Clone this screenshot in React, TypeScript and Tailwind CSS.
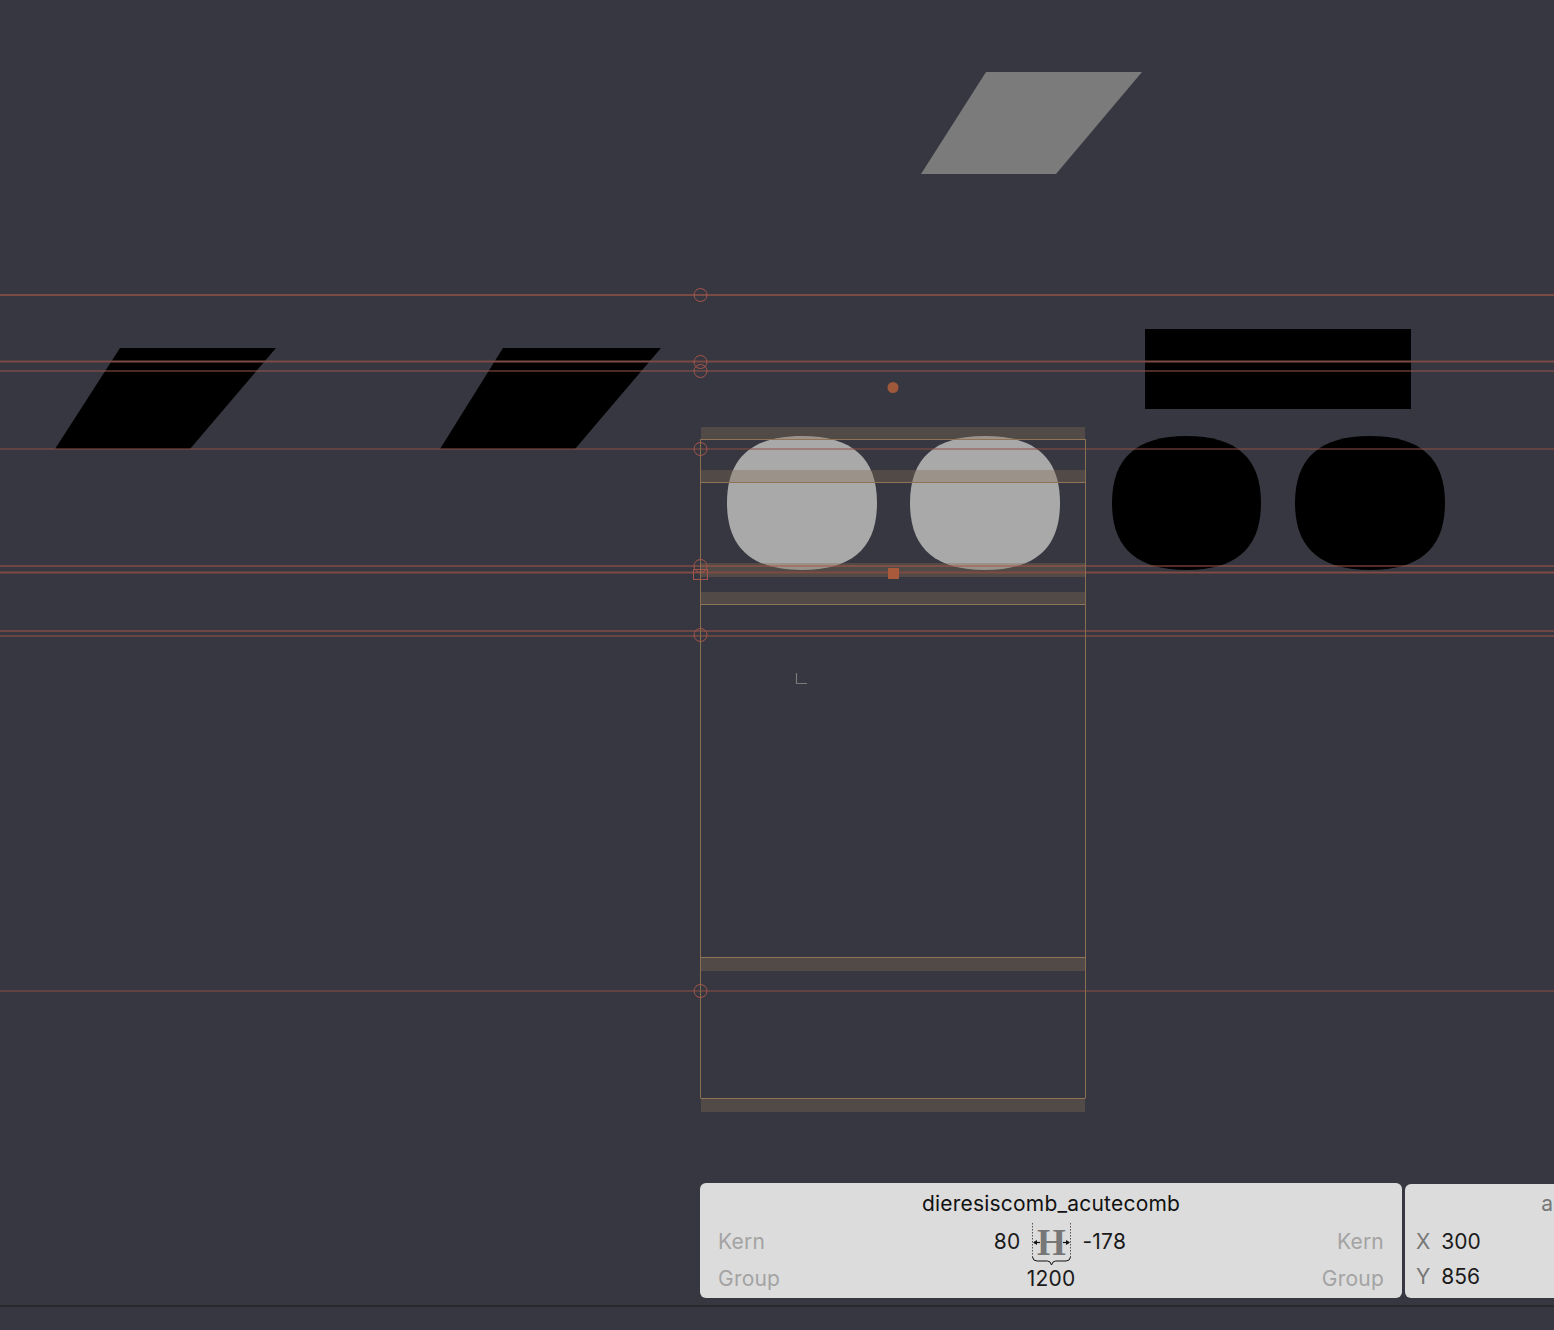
import React from 'react';

const guides = [
  { y: 295, w: 2, c: '#7a4a44' },
  { y: 361.5, w: 2, c: '#7a4a44' },
  { y: 371, w: 1, c: '#9a574a' },
  { y: 449, w: 1, c: '#8e5044' },
  { y: 566, w: 1, c: '#a5584a' },
  { y: 572.5, w: 2, c: '#7f4a42' },
  { y: 631, w: 1, c: '#a5584a' },
  { y: 636, w: 1.5, c: '#7a4a44' },
  { y: 991, w: 1, c: '#8e5044' },
];

const guideCircles = [295, 362, 371, 449, 566, 635, 991];

// alignment zones over the glyph box
const bands = [
  [427, 439],
  [470, 482],
  [563, 577],
  [592, 604],
  [957, 971],
  [1098, 1112],
];

const boxLines = [439, 482, 604, 957, 1098];

// squircle path for the dot shapes
function squircle(x: number, y: number, w: number, h: number) {
  const a = w / 2;
  const b = h / 2;
  const cx = x + a;
  const cy = y + b;
  const k = 0.67;
  return [
    `M ${cx} ${cy - b}`,
    `C ${cx + k * a} ${cy - b} ${cx + a} ${cy - k * b} ${cx + a} ${cy}`,
    `C ${cx + a} ${cy + k * b} ${cx + k * a} ${cy + b} ${cx} ${cy + b}`,
    `C ${cx - k * a} ${cy + b} ${cx - a} ${cy + k * b} ${cx - a} ${cy}`,
    `C ${cx - a} ${cy - k * b} ${cx - k * a} ${cy - b} ${cx} ${cy - b}`,
    'Z',
  ].join(' ');
}

const Canvas = () => (
  <svg width="1554" height="1305" viewBox="0 0 1554 1305" className="block">
    {/* neighbouring glyphs */}
    <polygon points="986,72 1142,72 1056,174 921,174" fill="#7b7b7b" />
    <polygon points="120,348 276,348 190,449 55,449" fill="#000" />
    <polygon points="503,348 661,348 575,449 440,449" fill="#000" />
    <rect x="1145" y="329" width="266" height="80" fill="#000" />
    <path d={squircle(1112, 436, 149, 134)} fill="#000" />
    <path d={squircle(1295, 436, 150, 134)} fill="#000" />

    {/* active glyph */}
    <path d={squircle(727, 436, 150, 134)} fill="#a9a9a9" />
    <path d={squircle(910, 436, 150, 134)} fill="#a9a9a9" />

    {bands.map(([t, b]) => (
      <rect key={t} x="701" y={t} width="384" height={b - t} fill="rgba(129,107,84,0.36)" />
    ))}

    {guides.map((g) => (
      <line key={g.y} x1="0" x2="1554" y1={g.y} y2={g.y} stroke={g.c} strokeWidth={g.w} />
    ))}

    {/* glyph box */}
    {boxLines.map((y) => (
      <line key={y} x1="700.5" x2="1085.5" y1={y + 0.5} y2={y + 0.5} stroke="#8f7555" strokeWidth="1" />
    ))}
    <line x1="700.5" x2="700.5" y1="439" y2="1098" stroke="#8a6e52" strokeWidth="1" />
    <line x1="1085.5" x2="1085.5" y1="439" y2="1098" stroke="#8a6e52" strokeWidth="1" />

    {guideCircles.map((y) => (
      <circle key={y} cx="700.5" cy={y} r="6.5" fill="none" stroke="#a4564a" strokeWidth="1" />
    ))}
    <rect x="693.5" y="569.5" width="14" height="10" fill="none" stroke="#a4564a" strokeWidth="1" />

    {/* anchors */}
    <circle cx="893" cy="387.5" r="5.5" fill="#a0583a" />
    <rect x="888" y="568" width="11" height="11" fill="#a85a3a" />

    {/* origin mark */}
    <path d="M796.5 673 V683.5 H807" fill="none" stroke="#7a7a7a" strokeWidth="1.2" />
  </svg>
);

const SpacingIcon = () => (
  <svg width="41" height="44" viewBox="0 0 41 44" className="mx-[10px] -my-[4px] translate-y-[3px]">
    <line x1="1.5" y1="0" x2="1.5" y2="34" stroke="#555" strokeWidth="1" strokeDasharray="1.5 1.5" />
    <line x1="39.5" y1="0" x2="39.5" y2="34" stroke="#555" strokeWidth="1" strokeDasharray="1.5 1.5" />
    <text x="20.5" y="32" textAnchor="middle" fontFamily="'Liberation Serif', serif" fontWeight="700" fontSize="37" fill="#777">
      H
    </text>
    <line x1="3" y1="19.5" x2="9" y2="19.5" stroke="#111" strokeWidth="1.2" />
    <polygon points="2,19.5 6,17 6,22" fill="#111" />
    <line x1="32" y1="19.5" x2="38" y2="19.5" stroke="#111" strokeWidth="1.2" />
    <polygon points="39,19.5 35,17 35,22" fill="#111" />
    <path d="M1.5 34 Q2 38 6 38 H16.5 Q19.5 38 20.5 42 Q21.5 38 24.5 38 H35 Q39 38 39.5 34" fill="none" stroke="#111" strokeWidth="1" />
  </svg>
);

const InfoPanel = () => (
  <div className="absolute left-[700px] top-[1183px] flex items-start">
    <div className="w-[702px] h-[115px] bg-[#dcdcdc] rounded-[6px] flex flex-col text-[21px] tracking-[0.01em] leading-none">
      <div className="h-[40px] flex items-center justify-center text-[#111]">dieresiscomb_acutecomb</div>
      <div className="h-[37px] grid grid-cols-[1fr_auto_1fr] items-center px-[18px]">
        <span className="text-[#a3a3a3]">Kern</span>
        <div className="flex items-center text-[#1a1a1a]">
          <span className="w-[48px] text-right">80</span>
          <SpacingIcon />
          <span className="w-[48px] pl-[1px]">-178</span>
        </div>
        <span className="text-right text-[#a3a3a3]">Kern</span>
      </div>
      <div className="h-[37px] grid grid-cols-[1fr_auto_1fr] items-center px-[18px]">
        <span className="text-[#a3a3a3]">Group</span>
        <span className="text-[#1a1a1a]">1200</span>
        <span className="text-right text-[#a3a3a3]">Group</span>
      </div>
    </div>
    <div className="ml-[3px] mt-[1px] w-[149px] h-[114px] bg-[#dcdcdc] rounded-l-[6px] flex flex-col text-[21px] leading-none">
      <div className="h-[38px] flex items-center justify-end pr-[1px] text-[#777]">a</div>
      <div className="h-[38px] flex items-center pl-[11px] gap-[11px]">
        <span className="text-[#777]">X</span>
        <span className="text-[#1a1a1a]">300</span>
      </div>
      <div className="h-[32px] flex items-center pl-[11px] gap-[11px]">
        <span className="text-[#777]">Y</span>
        <span className="text-[#1a1a1a]">856</span>
      </div>
    </div>
  </div>
);

export default function App() {
  return (
    <div
      className="w-[1554px] h-[1330px] bg-[#373741] overflow-hidden flex flex-col"
      style={{ fontFamily: "Inter, 'Noto Sans', sans-serif" }}
    >
      <div className="relative h-[1305px]">
        <Canvas />
        <InfoPanel />
      </div>
      <div className="h-[2px] bg-[#29292d]" />
      <div className="flex-1 bg-[#373741]" />
    </div>
  );
}
